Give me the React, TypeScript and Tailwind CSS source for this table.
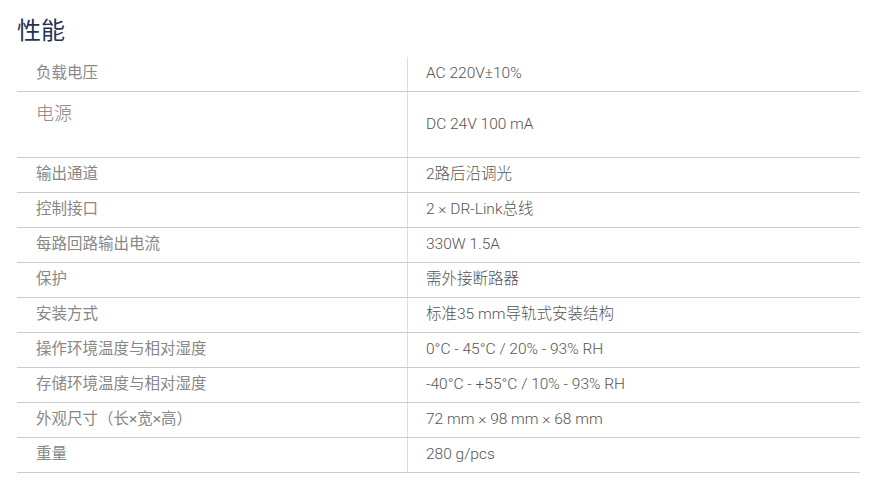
const specs = [
  { label: "负载电压", value: "AC 220V±10%" },
  { label: "电源", value: "DC 24V 100 mA", tall: true },
  { label: "输出通道", value: "2路后沿调光" },
  { label: "控制接口", value: "2 × DR-Link总线" },
  { label: "每路回路输出电流", value: "330W 1.5A" },
  { label: "保护", value: "需外接断路器" },
  { label: "安装方式", value: "标准35 mm导轨式安装结构" },
  { label: "操作环境温度与相对湿度", value: "0°C - 45°C / 20% - 93% RH" },
  { label: "存储环境温度与相对湿度", value: "-40°C - +55°C / 10% - 93% RH" },
  { label: "外观尺寸（长×宽×高）", value: "72 mm × 98 mm × 68 mm" },
  { label: "重量", value: "280 g/pcs" },
];

export default function App() {
  return (
    <div className="w-[883px] h-[480px] bg-white pl-[17px] pt-[15px] font-['Roboto','Noto_Sans_CJK_SC',sans-serif]">
      <h2 className="text-[24px] leading-[32px] text-[#1d3658] font-normal">性能</h2>

      <div className="mt-[10px] w-[843px]">
        {specs.map((row) => (
          <div key={row.label} className="flex border-b border-[#cdcdcd]">
            <div
              className={
                row.tall
                  ? "w-[391px] border-r border-[#dcdcdc] pl-[19px] pt-[9px] h-[65px] text-[18px] leading-[26px] font-light text-[#808080]"
                  : "w-[391px] border-r border-[#dcdcdc] pl-[19px] h-[34px] flex items-center text-[15.5px] text-[#888]"
              }
            >
              {row.label}
            </div>
            <div
              className={
                row.tall
                  ? "flex-1 pl-[18px] flex items-center h-[65px] text-[15.5px] font-light text-[#555]"
                  : "flex-1 pl-[18px] flex items-center h-[34px] text-[15.5px] font-light text-[#555]"
              }
            >
              {row.value}
            </div>
          </div>
        ))}
      </div>
    </div>
  );
}
